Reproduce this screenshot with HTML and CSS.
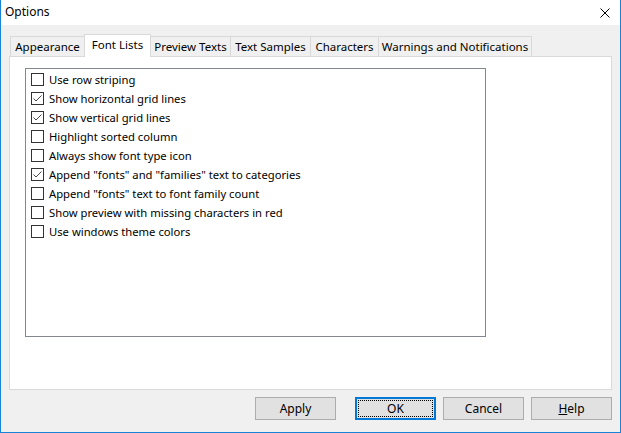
FILE: index.html
```html
<!DOCTYPE html>
<html>
<head>
<meta charset="utf-8">
<link rel="stylesheet" href="styles.css">
</head>
<body>
<div class="window">
  <div class="titlebar">
    <span class="title">Options</span>
    <svg class="close" width="10" height="10" viewBox="0 0 10 10"><path d="M0.5 0.5 L9.5 9.5 M9.5 0.5 L0.5 9.5" stroke="#000" stroke-width="1" fill="none"/></svg>
  </div>
  <div class="body">
    <div class="tabs">
      <div class="tab w-appearance">Appearance</div>
      <div class="tab active w-fontlists">Font Lists</div>
      <div class="tab w-preview">Preview Texts</div>
      <div class="tab w-samples">Text Samples</div>
      <div class="tab w-chars">Characters</div>
      <div class="tab w-warn">Warnings and Notifications</div>
    </div>
    <div class="panel">
      <div class="list">
        <div class="row"><span class="cb"></span><span>Use row striping</span></div>
        <div class="row"><span class="cb"><svg width="11" height="11" viewBox="0 0 11 11"><polyline points="1.5,5.5 4,8 9.5,2.5" stroke="#4a4a4a" stroke-width="1" fill="none"/></svg></span><span>Show horizontal grid lines</span></div>
        <div class="row"><span class="cb"><svg width="11" height="11" viewBox="0 0 11 11"><polyline points="1.5,5.5 4,8 9.5,2.5" stroke="#4a4a4a" stroke-width="1" fill="none"/></svg></span><span>Show vertical grid lines</span></div>
        <div class="row"><span class="cb"></span><span>Highlight sorted column</span></div>
        <div class="row"><span class="cb"></span><span>Always show font type icon</span></div>
        <div class="row"><span class="cb"><svg width="11" height="11" viewBox="0 0 11 11"><polyline points="1.5,5.5 4,8 9.5,2.5" stroke="#4a4a4a" stroke-width="1" fill="none"/></svg></span><span>Append "fonts" and "families" text to categories</span></div>
        <div class="row"><span class="cb"></span><span>Append "fonts" text to font family count</span></div>
        <div class="row"><span class="cb"></span><span>Show preview with missing characters in red</span></div>
        <div class="row"><span class="cb"></span><span>Use windows theme colors</span></div>
      </div>
    </div>
    <div class="buttons">
      <div class="btn apply">Apply</div>
      <div class="btn ok"><span class="focus">OK</span></div>
      <div class="btn">Cancel</div>
      <div class="btn"><span class="u">H</span>elp</div>
    </div>
  </div>
</div>
</body>
</html>
```
FILE: styles.css
```css
html, body {
  margin: 0;
  padding: 0;
  background: #ffffff;
}
body {
  font-family: "Noto Sans", "Open Sans", sans-serif;
  font-size: 11.5px;
  color: #000;
}
.window {
  width: 621px;
  height: 433px;
  box-sizing: border-box;
  border: 1px solid #1883d7;
  border-top: none;
  display: flex;
  flex-direction: column;
  overflow: hidden;
}
.titlebar {
  height: 25px;
  background: #fff;
  display: flex;
  align-items: center;
  justify-content: space-between;
  padding: 0 10px 0 4px;
  flex: none;
}
.title {
  font-size: 12px;
  line-height: 16px;
  margin-top: -1px;
}
.close {
  display: block;
  margin-top: 1px;
}
.body {
  flex: 1;
  background: #f0f0f0;
  padding: 9px 8px 0 8px;
  display: flex;
  flex-direction: column;
}
.tabs {
  height: 22px;
  display: flex;
  align-items: flex-end;
  padding-left: 1px;
  flex: none;
}
.tab {
  box-sizing: border-box;
  height: 20px;
  border: 1px solid #d9d9d9;
  border-bottom: none;
  margin-left: -1px;
  background: #f0f0f0;
  display: flex;
  align-items: center;
  justify-content: center;
  padding-bottom: 1px;
  white-space: nowrap;
}
.tab:first-child { margin-left: 0; }
.tab.active {
  height: 23px;
  margin-bottom: -1px;
  background: #fff;
  position: relative;
  z-index: 1;
  padding-bottom: 3px;
}
.w-appearance { width: 75px; }
.w-fontlists { width: 67px; }
.w-preview { width: 81px; }
.w-samples { width: 81px; }
.w-chars { width: 69px; }
.w-warn { width: 154px; }
.panel {
  height: 334px;
  box-sizing: border-box;
  background: #fff;
  border: 1px solid #d9d9d9;
  padding: 11px 0 0 15px;
  flex: none;
}
.list {
  width: 461px;
  height: 269px;
  box-sizing: border-box;
  border: 1px solid #828790;
  padding: 4px 0 0 5px;
  font-size: 11.25px;
}
.row {
  height: 19px;
  display: flex;
  align-items: flex-start;
  white-space: nowrap;
}
.row span:last-child {
  line-height: 16px;
  margin-top: -1px;
}
.cb {
  width: 13px;
  height: 13px;
  box-sizing: border-box;
  border: 1px solid #333;
  background: #fff;
  margin-right: 5px;
  flex: none;
  display: flex;
}
.cb svg { display: block; }
.buttons {
  display: flex;
  justify-content: flex-end;
  gap: 7px;
  margin-top: 7px;
  flex: none;
}
.btn {
  width: 81px;
  height: 23px;
  box-sizing: border-box;
  background: #e1e1e1;
  border: 1px solid #adadad;
  display: flex;
  align-items: center;
  justify-content: center;
  font-size: 12px;
  padding-bottom: 1px;
}
.btn.apply { margin-right: 12px; }
.btn.ok {
  border: 2px solid #0078d7;
  padding: 1px;
}
.focus {
  flex: 1;
  align-self: stretch;
  border: 1px dotted #000;
  display: flex;
  align-items: center;
  justify-content: center;
}
.u { text-decoration: underline; }
```
